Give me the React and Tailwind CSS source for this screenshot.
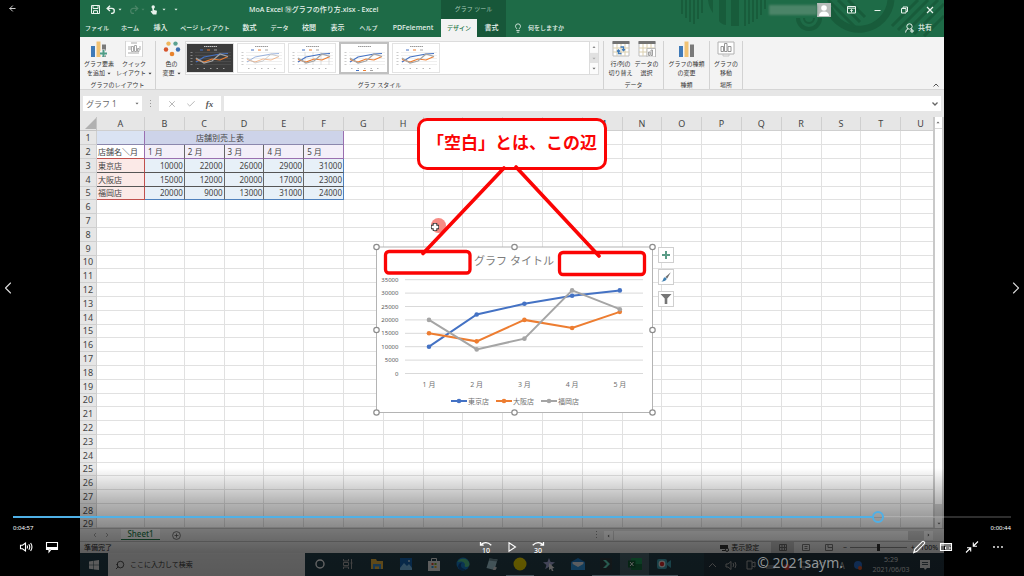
import React from "react";
import { ArrowLeft, ChevronLeft, ChevronRight, Search, Lightbulb, X, Check } from "lucide-react";

const TABS = [
  ["ファイル", "w-[34px] text-[6px]"],
  ["ホーム", "w-[32px] text-[6px]"],
  ["挿入", "w-[29px] text-[7px]"],
  ["ページ レイアウト", "w-[60px] text-[6px]"],
  ["数式", "w-[29px] text-[7px]"],
  ["データ", "w-[31px] text-[6px]"],
  ["校閲", "w-[28px] text-[7px]"],
  ["表示", "w-[29px] text-[7px]"],
  ["ヘルプ", "w-[33px] text-[6px]"],
  ["PDFelement", "w-[56px] text-[7px]"],
  ["デザイン", "w-[36px] text-[6px] bg-[#f3f3f3] text-[#217346]"],
  ["書式", "w-[29px] text-[7px] bg-[#175739]"],
];

const COLUMNS = "ABCDEFGHIJKLMNOPQRSTU".split("");
const MONTHS = ["1 月", "2 月", "3 月", "4 月", "5 月"];
const SHOPS = [
  { name: "東京店", color: "#4472c4", values: [10000, 22000, 26000, 29000, 31000] },
  { name: "大阪店", color: "#ed7d31", values: [15000, 12000, 20000, 17000, 23000] },
  { name: "福岡店", color: "#a5a5a5", values: [20000, 9000, 13000, 31000, 24000] },
];

function Caret() {
  return (
    <svg width="4" height="3" viewBox="0 0 4 3" className="inline-block shrink-0">
      <path d="M0.5 0.8h3L2 2.4z" fill="currentColor" />
    </svg>
  );
}

/* ---------- title bar ---------- */

function HeaderPattern() {
  return (
    <svg className="absolute right-0 top-0" width="270" height="37" viewBox="674 0 270 37" fill="none" stroke="#185c3b">
      <path d="M682 0v14M686 0v18M690 0v22M694 0v24M698 0v19M702 0v13" strokeWidth="2" />
      <path d="M708 0q1 8 5 13V0zM719 0h7v25q-5-1-7-4zM731 0h8v26h-8z" fill="#185c3b" stroke="none" />
      <path d="M745 0v26M749 0v24M753 0v22M757 0v19M761 0v15M765 0v9" strokeWidth="2" />
      <path d="M798 18a11 11 0 0 0 22 0" strokeWidth="4" />
      <path d="M804 18a5 5 0 0 0 10 0" strokeWidth="2" />
      <path d="M829 8a32 32 0 0 0 62-8" strokeWidth="7" />
      <path d="M828 0l27 27M838 0l22 22M848 0l17 17" strokeWidth="3" />
      <path d="M892 26l26-26M898 30l30-30M906 32l32-32M914 34l30-30M924 36l20-20" strokeWidth="3" />
    </svg>
  );
}

function TitleBar() {
  return (
    <header className="relative shrink-0 bg-[#1e6b47] text-[#e9f3ed]">
      <HeaderPattern />
      <div className="relative flex h-[19px] items-center">
        <div className="flex w-[361px] items-center">
          <div className="flex w-[144px] items-center pl-[11px]">
            <button aria-label="上書き保存" className="w-[15px]">
              <svg width="9" height="9" viewBox="0 0 9 9">
                <path d="M0.5 0.5h8v8h-8z M2 0.5v3h5v-3 M2.5 8.5V5.7h4v2.8" fill="none" stroke="currentColor" />
              </svg>
            </button>
            <button aria-label="元に戻す" className="flex w-[23px] items-center gap-[2px]">
              <svg width="10" height="9" viewBox="0 0 10 9">
                <path d="M4 0.8L1.2 3.4L4 6M1.4 3.4h4.4a2.4 2.4 0 0 1 0 5H5" fill="none" stroke="currentColor" strokeWidth="1.4" />
              </svg>
              <Caret />
            </button>
            <button aria-label="やり直し" className="flex w-[21px] items-center gap-[2px] text-[#4a8567]">
              <svg width="10" height="9" viewBox="0 0 10 9">
                <path d="M6 0.8L8.8 3.4L6 6M8.6 3.4H4.2a2.4 2.4 0 0 0 0 5H5" fill="none" stroke="currentColor" strokeWidth="1.2" />
              </svg>
              <Caret />
            </button>
            <button aria-label="タッチ" className="flex w-[24px] items-center gap-[4px]">
              <svg width="8" height="10" viewBox="0 0 8 10">
                <circle cx="3.2" cy="2" r="1.7" fill="currentColor" />
                <path d="M2.4 2h1.6v3l3 .8-.6 3.6H3L.6 6.4l1-.6.8.6z" fill="currentColor" />
              </svg>
              <Caret />
            </button>
            <button aria-label="カスタマイズ" className="flex"><Caret /></button>
          </div>
          <h1 className="flex-1 whitespace-nowrap pl-[25px] text-[7px] font-medium leading-[10px]">
            MoA Excel ⑲グラフの作り方.xlsx - Excel
          </h1>
        </div>
        <div className="flex h-full w-[65px] items-center justify-center bg-[#175739] text-[6px] text-[#a9cbb9]">グラフ ツール</div>
        <div className="ml-auto flex items-center">
          <div className="h-[10px] w-[48px] bg-[#4b8468] blur-[1px]" />
          <svg width="14" height="14" viewBox="0 0 14 14" className="mr-[16px]">
            <path d="M0 0h14v14H0z" fill="#b9bdbb" />
            <circle cx="7" cy="5" r="2.8" fill="#fff" />
            <path d="M2 13q0-4.600 5-4.600t5 4.600z" fill="#fff" />
          </svg>
          <button aria-label="リボンの表示オプション" className="flex w-[27px]">
            <svg width="9" height="8" viewBox="0 0 9 8" fill="none" stroke="currentColor">
              <path d="M0.500 0.500h8v6.500h-8zM0.500 2.200h8M4.500 6.500V3.700M3.200 4.800l1.300-1.200 1.300 1.200" />
            </svg>
          </button>
          <button aria-label="最小化" className="flex w-[26px]">
            <svg width="7" height="8" viewBox="0 0 7 8"><path d="M0.500 4.500h6" stroke="currentColor" /></svg>
          </button>
          <button aria-label="元に戻す（縮小）" className="flex w-[26px]">
            <svg width="8" height="8" viewBox="0 0 8 8" fill="none" stroke="currentColor">
              <path d="M1.500 2.500h4.500v4.500h-4.500zM3 2.500V1h4.500v4.500H6" />
            </svg>
          </button>
          <button aria-label="閉じる" className="flex w-[18px]">
            <svg width="8" height="8" viewBox="0 0 8 8"><path d="M1 1l6 6M7 1l-6 6" stroke="currentColor" strokeWidth="1.200" /></svg>
          </button>
        </div>
      </div>
      <nav className="relative flex h-[18px] items-stretch">
        {TABS.map(([label, cls]) => (
          <button key={label} className={"whitespace-nowrap font-medium leading-[18px] " + cls}>{label}</button>
        ))}
        <button className="ml-[7px] flex items-center gap-[5px] text-[6px] font-medium">
          <Lightbulb size={10} strokeWidth={2} />
          何をしますか
        </button>
        <button className="ml-auto mr-[12px] flex items-center gap-[4px] text-[7px] font-medium">
          <svg width="9" height="10" viewBox="0 0 9 10" fill="none" stroke="currentColor">
            <circle cx="4.500" cy="3.500" r="2.700" />
            <path d="M0.600 9.500q0-3 2.600-3.700M5.800 5.800l1 1M5 8h4M7 6v4" />
          </svg>
          共有
        </button>
      </nav>
    </header>
  );
}

/* ---------- ribbon ---------- */

function BarsIcon({ plus }) {
  return (
    <svg width="18" height="16" viewBox="0 0 18 16">
      <path d="M1 5h4v11H1z" fill="#3f7ab8" />
      <path d="M6.500 0.500h4V16h-4z" fill="#f0c274" />
      <path d="M12 3.500h4V16h-4z" fill="#7a7a7a" />
      {plus && <path d="M13.500 8.500v7M10 12h7.500" stroke="#f3f3f3" strokeWidth="4" />}
      {plus && <path d="M13.500 9v7M10 12.500h7" stroke="#4f9d87" strokeWidth="2" />}
    </svg>
  );
}

function LayoutIcon() {
  return (
    <svg width="18" height="16" viewBox="0 0 18 16" fill="none" stroke="#a9a9a9">
      <path d="M0.500 0h17v16h-17z" fill="#fff" stroke="#d4d4d4" />
      <path d="M6 2h6M3 6h4M3 8h4M14 6h2M14 8h2M3 12h11" strokeWidth="1.200" />
      <path d="M6.500 5.500h2v5h-2zM9.500 4.500h2v6h-2zM12.500 7.500h1.500v3h-1.500z" />
    </svg>
  );
}

function PaletteIcon() {
  return (
    <svg width="18" height="16" viewBox="0 0 18 16">
      <circle cx="5.500" cy="2.600" r="2.200" fill="#eeb65c" />
      <circle cx="12.500" cy="2.600" r="2.200" fill="#5ba191" />
      <circle cx="3" cy="8.500" r="2.200" fill="#d6552d" />
      <circle cx="15" cy="8.500" r="2.200" fill="#3d6fb0" />
      <circle cx="9" cy="13" r="2.300" fill="#e8832d" />
    </svg>
  );
}

function SheetIcon({ swap }) {
  return (
    <svg width="18" height="16" viewBox="0 0 18 16" fill="none">
      <path d="M1 1h16v14H1z" fill="#fff" stroke="#bdbdbd" />
      <path d="M0.500 0h17v3h-17z" fill="#737373" />
      <path d="M1 7h16M1 11h16M5 3v12M9 3v12M13 3v12" stroke="#dbcfae" />
      {swap ? (
        <path d="M8.500 6h3v3.500M10 8.200l1.500 1.500 1.500-1.500M9.500 12.500h-3V9.300M5 10.500l1.500-1.500 1.500 1.500" stroke="#3f7ab8" strokeWidth="1.300" />
      ) : (
        <g stroke="#8a8a8a">
          <path d="M9 7.500h8.500V16H9z" fill="#fff" stroke="#bbb" />
          <path d="M10.500 11h1.500v3.500h-1.500zM13 9h1.500v5.500H13z" strokeWidth="0.800" />
        </g>
      )}
    </svg>
  );
}

function MoveIcon() {
  return (
    <svg width="18" height="16" viewBox="0 0 18 16" fill="none" stroke="#8a8a8a">
      <path d="M1 1h16v12H1z" fill="#fff" stroke="#b0b0b0" />
      <path d="M4 5.500h2.500v5H4zM7.500 2.500H10v8H7.500zM11 5.500h3v5h-3z" strokeWidth="0.900" />
      <path d="M6 13v2h6v-2" stroke="#c5c5c5" />
    </svg>
  );
}

function ToolButton({ icon, lines, caret, className }) {
  return (
    <button className={"flex flex-col items-center justify-start whitespace-nowrap text-[6px] leading-[9px] " + className}>
      {icon}
      <span className="mt-[3px]">{lines[0]}</span>
      <span className="flex items-center gap-[2px]">{lines[1]}{caret && <Caret />}</span>
    </button>
  );
}

function Group({ label, className, children }) {
  return (
    <section className={"flex flex-col border-r border-[#d2d2d2] " + className}>
      <div className="flex flex-1 justify-center">{children}</div>
      <h2 className="text-center text-[6px] leading-[8px]">{label}</h2>
    </section>
  );
}

function MiniChart({ dark, soft, grid, selected }) {
  const ink = dark ? "#c8c8c8" : "#9a9a9a";
  return (
    <button aria-label="グラフ スタイル" className={selected ? "border-2 border-[#c0c0c0] bg-white" : "border border-[#e3e3e3] bg-white"}>
      <svg width="46" height="28" viewBox="0 0 46 28" fill="none">
        <path d="M0 0h46v28H0z" fill={dark ? "#3c3c3c" : "#fff"} />
        <path d="M17 2.500h13" stroke={ink} strokeWidth="1" strokeDasharray="1.500 0.500" />
        <path d="M8 8.500h36M8 11.500h36M8 14.500h36M8 17.500h36M8 20.500h36" stroke={dark ? "#555" : "#e4e4e4"} strokeWidth="0.600" />
        {grid && <path d="M16 8v13M24 8v13M32 8v13M40 8v13" stroke="#ccc" strokeWidth="0.600" />}
        <path d="M4.500 8v13" stroke={ink} strokeWidth="2" strokeDasharray="1 2" opacity="0.500" />
        <path d="M10 24.500h32" stroke={ink} strokeDasharray="1.500 5" opacity="0.700" />
        <g strokeWidth={soft ? "0.800" : "1.200"} opacity={soft ? "0.650" : "1"}>
          <path d="M9 18l8-5 8-1.500 8-1.500 8-.5" stroke="#4472c4" />
          <path d="M9 15.500l8 2.500 8-3 8 1 8-3.500" stroke="#ed7d31" />
          <path d="M9 14l8 5 8-2 8-7 8 2.500" stroke="#a5a5a5" />
        </g>
        <path d={selected ? "M15 26.500h3" : "M13 6h3"} stroke="#4472c4" />
        <path d={selected ? "M22 26.500h3" : "M20 6h3"} stroke="#ed7d31" />
        <path d={selected ? "M29 26.500h3" : "M27 6h3"} stroke="#a5a5a5" />
      </svg>
    </button>
  );
}

function Ribbon() {
  return (
    <div className="flex h-[53px] shrink-0 border-b border-[#d5d5d5] bg-[#f3f3f3] pt-[4px] text-[#333]">
      <Group label="グラフのレイアウト" className="w-[76px]">
        <ToolButton className="w-[36px] pl-px" icon={<BarsIcon plus />} lines={["グラフ要素", "を追加"]} caret />
        <ToolButton className="w-[38px] pr-[3px]" icon={<LayoutIcon />} lines={["クイック", "レイアウト"]} caret />
      </Group>
      <Group label="グラフ スタイル" className="w-[448px]">
        <ToolButton className="w-[29px] pl-[2px]" icon={<PaletteIcon />} lines={["色の", "変更"]} caret />
        <div className="flex h-[34px] flex-1 items-center gap-[3px] border border-[#dcdcdc] bg-white">
          <MiniChart dark />
          <MiniChart soft />
          <MiniChart grid />
          <MiniChart selected />
          <MiniChart />
        </div>
        <div className="mr-[4px] flex h-[34px] w-[9px] flex-col border border-l-0 border-[#dcdcdc] text-[#666]">
          <button aria-label="上へ" className="flex flex-1 rotate-180 items-center justify-center bg-[#fbfbfb]"><Caret /></button>
          <button aria-label="下へ" className="flex flex-1 items-center justify-center bg-[#e1e1e1] text-[#aaa]"><Caret /></button>
          <button aria-label="その他" className="flex flex-1 items-center justify-center bg-[#fbfbfb]"><Caret /></button>
        </div>
      </Group>
      <Group label="データ" className="w-[60px]">
        <ToolButton className="w-[26px]" icon={<SheetIcon swap />} lines={["行/列の", "切り替え"]} />
        <ToolButton className="w-[26px]" icon={<SheetIcon />} lines={["データの", "選択"]} />
      </Group>
      <Group label="種類" className="w-[46px]">
        <ToolButton className="w-[40px]" icon={<BarsIcon />} lines={["グラフの種類", "の変更"]} />
      </Group>
      <Group label="場所" className="w-[33px]">
        <ToolButton className="w-[30px]" icon={<MoveIcon />} lines={["グラフの", "移動"]} />
      </Group>
      <button aria-label="リボンを折りたたむ" className="ml-auto mr-[5px] self-end pb-[2px]">
        <svg width="6" height="4" viewBox="0 0 6 4"><path d="M0.500 3.500L3 1l2.500 2.500" fill="none" stroke="#555" /></svg>
      </button>
    </div>
  );
}

function FormulaBar() {
  return (
    <div className="flex h-[27px] shrink-0 items-center bg-[#e6e6e6] px-[3px] text-[#666]">
      <button className="flex h-[15px] w-[59px] items-center justify-between bg-white px-[3px] text-[8px]">
        グラフ 1<Caret />
      </button>
      <svg width="17" height="8" viewBox="0 0 17 8"><path d="M8.500 0v8" stroke="#999" strokeDasharray="1 2" /></svg>
      <div className="flex h-[15px] w-[62px] items-center justify-around bg-white px-[3px]">
        <button aria-label="キャンセル"><X size={10} color="#aaa" /></button>
        <button aria-label="入力"><Check size={10} color="#aaa" /></button>
        <button className="font-['Liberation_Serif',serif] text-[9px] font-bold italic leading-[12px] text-[#555]">fx</button>
      </div>
      <div className="ml-[3px] flex h-[15px] min-w-0 flex-1 items-center bg-white pr-[3px]">
        <input aria-label="数式" className="min-w-0 flex-1 text-[8px] outline-none" />
        <svg width="6" height="4" viewBox="0 0 6 4"><path d="M0.500 0.500L3 3l2.500-2.500" fill="none" stroke="#666" strokeWidth="1.300" /></svg>
      </div>
    </div>
  );
}

/* ---------- sheet ---------- */

const PLAIN = "border-r border-b border-[#e1e1e1] p-0";

function RowCells({ row }) {
  if (row === 1) {
    return (
      <>
        <td
          colSpan={6}
          className="border-b border-r border-b-[#8b87ad] border-r-[#9a6fb0] bg-[linear-gradient(to_right,#dae3f3_47px,#9a6fb0_47px,#9a6fb0_48px,#cdd3e9_48px)] text-center"
        >
          店舗別売上表
        </td>
        <Blank from={6} />
      </>
    );
  }
  if (row === 2) {
    return (
      <>
        <td className="border-b border-r border-b-[#c0504d] border-r-[#9a6fb0] pl-px">店舗名＼月</td>
        {MONTHS.map((m, i) => (
          <td key={m} className={"border-b border-r border-b-[#9a6fb0] bg-[#f3eff9] pl-[3px] " + (i === 4 ? "border-r-[#9a6fb0]" : "border-r-[#666]")}>{m}</td>
        ))}
        <Blank from={6} />
      </>
    );
  }
  if (row <= 5) {
    const shop = SHOPS[row - 3];
    const last = row === 5;
    return (
      <>
        <td className={"border-b border-r border-r-[#c0504d] bg-[#fbe9e7] pl-px " + (last ? "border-b-[#c0504d]" : "border-b-[#555]")}>{shop.name}</td>
        {shop.values.map((v, i) => (
          <td key={v} className={"border-b border-r bg-[#e7f0f8] pr-px text-right " + (last ? "border-b-[#4f81bd] " : "border-b-[#555] ") + (i === 4 ? "border-r-[#4f81bd]" : "border-r-[#666]")}>{v}</td>
        ))}
        <Blank from={6} />
      </>
    );
  }
  return <Blank from={0} />;
}

function Blank({ from }) {
  return COLUMNS.slice(from).map((c) => <td key={c} className={PLAIN} />);
}

function rowHeight(row) {
  if (row === 29) return "h-[10px] leading-[9px]";
  return row % 5 === 0 ? "h-[13px]" : "h-[14px]";
}

function Sheet() {
  return (
    <table className="w-[861px] min-w-full table-fixed border-separate border-spacing-0 whitespace-nowrap bg-white text-[8px] leading-[12px] text-[#444]">
      <colgroup>
        <col className="w-[17px]" />
        <col className="w-[48px]" />
        {COLUMNS.slice(1).map((c) => <col key={c} />)}
      </colgroup>
      <thead>
        <tr className="h-[14px] bg-[#e6e6e6]">
          <th className="border-b border-r border-[#c4c4c4] p-0">
            <svg width="11" height="11" viewBox="0 0 11 11" className="ml-auto"><path d="M11 0v11H0z" fill="#b1b1b1" /></svg>
          </th>
          {COLUMNS.map((c) => (
            <th key={c} scope="col" className="border-b border-r border-[#cfcfcf] p-0 text-[9px] font-normal">{c}</th>
          ))}
        </tr>
      </thead>
      <tbody>
        {Array.from({ length: 29 }, (_, i) => i + 1).map((row) => (
          <tr key={row} className={rowHeight(row)}>
            <th scope="row" className={"border-r border-[#cfcfcf] bg-[#e6e6e6] p-0 text-[9px] font-normal " + (row === 29 ? "" : "border-b")}>{row}</th>
            <RowCells row={row} />
          </tr>
        ))}
      </tbody>
    </table>
  );
}

/* ---------- chart ---------- */

const px = (i) => 429 + i * 47.7;
const py = (v) => 373.5 - (v / 5000) * 13.4;
const HANDLES = [[376.5, 247], [514.5, 247], [652.5, 247], [376.5, 330], [652.5, 330], [376.5, 412.5], [514.5, 412.5], [652.5, 412.5]];

function Chart() {
  return (
    <svg className="absolute left-[292px] top-[126px]" width="284" height="174" viewBox="372 243 284 174" role="img" aria-label="グラフ タイトル">
      <rect x="376.500" y="247" width="276" height="165.500" fill="#fff" stroke="#b4b4b4" />
      <text x="514" y="265" textAnchor="middle" fontSize="11" fill="#7d7d7d">グラフ タイトル</text>
      {Array.from({ length: 8 }, (_, i) => i * 5000).map((v) => (
        <g key={v}>
          <path d={`M405 ${py(v)}H643`} stroke="#d9d9d9" />
          <text x="398.500" y={py(v) + 2} textAnchor="end" fontSize="6" fill="#595959">{v}</text>
        </g>
      ))}
      {MONTHS.map((m, i) => (
        <text key={m} x={px(i)} y="386.500" textAnchor="middle" fontSize="7" fill="#707070">{m}</text>
      ))}
      {SHOPS.map((s, k) => (
        <g key={s.name}>
          <polyline points={s.values.map((v, i) => `${px(i)},${py(v)}`).join(" ")} fill="none" stroke={s.color} strokeWidth="2" />
          {s.values.map((v, i) => <circle key={i} cx={px(i)} cy={py(v)} r="2.300" fill={s.color} />)}
          <path d={`M${451 + k * 45} 401h16`} stroke={s.color} strokeWidth="2" />
          <circle cx={459 + k * 45} cy="401" r="2.300" fill={s.color} />
          <text x={468 + k * 45} y="403.500" fontSize="7" fill="#707070">{s.name}</text>
        </g>
      ))}
      {HANDLES.map(([x, y]) => (
        <circle key={`${x}-${y}`} cx={x} cy={y} r="2.700" fill="#fff" stroke="#8c8c8c" strokeWidth="1.200" />
      ))}
    </svg>
  );
}

function ChartButtons() {
  const box = "flex size-[16px] items-center justify-center border border-[#cfcfcf] bg-white";
  return (
    <div className="absolute left-[578px] top-[130px] flex flex-col gap-[6px]">
      <button aria-label="グラフ要素" className={box}>
        <svg width="8" height="8" viewBox="0 0 8 8"><path d="M4 0v8M0 4h8" stroke="#5b9c87" strokeWidth="2" /></svg>
      </button>
      <button aria-label="グラフ スタイル" className={box}>
        <svg width="10" height="10" viewBox="0 0 10 10">
          <path d="M9.800 0.200L6.200 6.400 4.400 4.900z" fill="#6d6d6d" />
          <path d="M4 5.300l1.800 1.500Q4.500 9.800 0.300 9.500 2.200 8.500 2.300 7 2.600 5.600 4 5.300z" fill="#3f7fb0" />
        </svg>
      </button>
      <button aria-label="グラフ フィルター" className={box}>
        <svg width="12" height="10" viewBox="0 0 12 10"><path d="M0.500 0h11L7.300 4.500V10H4.700V4.500z" fill="#767676" /></svg>
      </button>
    </div>
  );
}

function Annotations() {
  return (
    <>
      <div className="absolute left-[337px] top-px flex h-[52px] w-[190px] items-center justify-center whitespace-nowrap rounded-[10px] border-[3px] border-[#fb0404] bg-white pb-[2px] text-[17px] font-bold text-[#fb0404]">
        「空白」とは、この辺
      </div>
      <svg className="absolute left-[300px] top-[43px]" width="270" height="120" viewBox="380 160 270 120" fill="none" stroke="#fb0404" strokeWidth="3.300">
        <circle cx="438.500" cy="225.500" r="7.500" fill="#f78b84" stroke="none" />
        <path d="M435 223v8M431 227h8" stroke="#333" strokeWidth="4.500" />
        <path d="M435 223.700v6.600M431.700 227h6.600" stroke="#fff" strokeWidth="2.600" />
        <rect x="385.500" y="251.500" width="84.500" height="21.500" rx="3.500" fill="#fff" />
        <rect x="559.500" y="252.500" width="85" height="22" rx="3.500" fill="#fff" />
        <path d="M504 168L423 253.500M516 167L599 256" strokeLinecap="round" strokeWidth="3.600" />
      </svg>
    </>
  );
}

function VerticalScroll() {
  return (
    <div className="flex w-[11px] shrink-0 flex-col border-l-2 border-r-2 border-[#c9c9c9] bg-[#d9d9d9] text-[#666]">
      <button aria-label="上へスクロール" className="flex h-[11px] rotate-180 items-center justify-center bg-white"><Caret /></button>
      <div className="mt-px flex-1 bg-white" />
      <div className="h-[14px]" />
      <button aria-label="下へスクロール" className="flex h-[10px] items-center justify-center bg-[#f4f4f4]"><Caret /></button>
    </div>
  );
}

function SheetTabs() {
  return (
    <div className="flex h-[13px] shrink-0 items-center border-t border-[#bbb] bg-[#dedede] text-[#555]">
      <div className="flex w-[41px] justify-center gap-[8px] text-[#999]">
        <svg width="4" height="6" viewBox="0 0 4 6"><path d="M3 1L1 3l2 2" fill="none" stroke="currentColor" /></svg>
        <svg width="4" height="6" viewBox="0 0 4 6"><path d="M1 1l2 2-2 2" fill="none" stroke="currentColor" /></svg>
      </div>
      <button className="h-[11px] w-[39px] self-start border-b border-[#217346] bg-[#f0f0f0] text-[8px] font-medium leading-[10px] text-[#217346]">Sheet1</button>
      <button aria-label="新しいシート" className="ml-[12px]">
        <svg width="9" height="9" viewBox="0 0 9 9" fill="none" stroke="#555" strokeWidth="0.800"><circle cx="4.500" cy="4.500" r="3.900" /><path d="M4.500 2.500v4M2.500 4.500h4" /></svg>
      </button>
      <svg width="3" height="8" viewBox="0 0 3 8" className="ml-auto mr-[6px]"><path d="M1.500 0v8" stroke="#888" strokeDasharray="1 2" /></svg>
      <div className="mr-[11px] flex w-[329px] items-center bg-[#d0d0d0]">
        <button aria-label="左へスクロール" className="flex h-[9px] w-[9px] rotate-90 items-center justify-center bg-[#f4f4f4]"><Caret /></button>
        <div className="ml-px h-[9px] flex-1 bg-[#f4f4f4]" />
        <div className="w-[16px]" />
        <button aria-label="右へスクロール" className="flex h-[9px] w-[9px] -rotate-90 items-center justify-center bg-[#f4f4f4]"><Caret /></button>
      </div>
    </div>
  );
}

function StatusBar() {
  return (
    <div className="flex h-[12px] shrink-0 items-center border-t border-[#b5b5b5] bg-[#e2e2e2] pl-[4px] pr-[6px] text-[7px] leading-[11px] text-[#222]">
      <span>準備完了</span>
      <button className="ml-auto mr-[12px] flex items-center gap-[2px] whitespace-nowrap">
        <svg width="9" height="8" viewBox="0 0 9 8"><path d="M0 1h8v4H0zM2 6h3v1H2z" fill="#333" /><circle cx="7" cy="5.800" r="1.600" fill="#dcdcdc" stroke="#333" /></svg>
        表示設定
      </button>
      <button aria-label="標準" className="flex h-full w-[23px] items-center justify-center bg-[#bdbdbd]">
        <svg width="8" height="7" viewBox="0 0 8 7" fill="none" stroke="#666"><path d="M.5 .5h7v6h-7zM3 .5v6M5.500 .5v6M.5 3.500h7" /></svg>
      </button>
      <button aria-label="ページ レイアウト" className="flex w-[23px] justify-center">
        <svg width="8" height="7" viewBox="0 0 8 7" fill="none" stroke="#777"><path d="M.5 .5h7v6h-7zM2.500 2.500h3M2.500 4.500h3" /></svg>
      </button>
      <button aria-label="改ページ プレビュー" className="flex w-[23px] justify-center">
        <svg width="8" height="7" viewBox="0 0 8 7" fill="none" stroke="#777"><path d="M.5 .5h7v6h-7zM3 .5v3h4.500" /></svg>
      </button>
      <span className="w-[10px] text-center">−</span>
      <input
        type="range"
        aria-label="ズーム"
        defaultValue="50"
        className="h-[8px] w-[57px] appearance-none bg-transparent [&::-webkit-slider-runnable-track]:h-px [&::-webkit-slider-runnable-track]:bg-[#888] [&::-webkit-slider-thumb]:-mt-[3px] [&::-webkit-slider-thumb]:h-[7px] [&::-webkit-slider-thumb]:w-[3px] [&::-webkit-slider-thumb]:appearance-none [&::-webkit-slider-thumb]:bg-[#333]"
      />
      <span className="w-[11px] text-center">+</span>
      <span className="pl-[2px]">100%</span>
    </div>
  );
}

/* ---------- task bar ---------- */

const APPS = [
  ["Cortana", <circle cx="7" cy="7" r="4" fill="none" stroke="#fff" strokeWidth="1.400" />],
  ["タスク ビュー", <path d="M2.500 2v2h5V2M2.500 12v-2h5v2M2.500 5.500h5v3h-5zM10.500 2v10M9.500 6h2" fill="none" stroke="#aaa" />],
  ["エクスプローラー", <><path d="M1 2h5l1 2h6v8H1z" fill="#f0b93f" /><path d="M3 7h8v5H9V9.500H5V12H3z" fill="#3f8fd0" /></>],
  ["フォト", <><path d="M1 1h12v12H1z" fill="#1467b8" /><path d="M1 11l4-5 3 3 2-2 3 4v2H1z" fill="#7cc4f5" /><circle cx="10" cy="4" r="1" fill="#cfe9fb" /></>],
  ["Store", <><path d="M4.500 4V1.500h5V4" fill="none" stroke="#eee" /><path d="M1 4h12v10H1z" fill="#eee" /><path d="M4.500 6h2v2h-2z" fill="#e5482c" /><path d="M7.500 6h2v2h-2z" fill="#7db52c" /><path d="M4.500 9h2v2h-2z" fill="#2c9fe0" /><path d="M7.500 9h2v2h-2z" fill="#f2b62b" /></>],
  ["Edge", <><circle cx="7" cy="7" r="6.500" fill="#1683d0" /><path d="M1.500 5A6.500 6.500 0 0 1 13.500 7q0 3-3.500 3-2-.3-1-2.500Q8 4 4.500 4.500z" fill="#55cc8f" /><path d="M5 8q-.5 3.500 5 4.500-6 3-8-3Q2.500 6 6 5.500 5 6.500 5 8z" fill="#0d4f96" /></>],
  ["メモ帳", <><path d="M4.500 1.500l8 1-3 10.500-8-2z" fill="#a9d3df" /><path d="M4.500 1.500l8 1-.5 2-8-1z" fill="#6f8f99" /><path d="M9 9.500l3 1-1.500 2.500L8 13z" fill="#e0e0e0" /></>],
  ["録画", <circle cx="7" cy="7" r="6.500" fill="#f4dc00" />],
  ["スター", <><path d="M7 1l1.600 4 4.400.3-3.400 2.700 1.200 4.200L7 9.800l-3.800 2.400 1.200-4.200L1 5.300 5.400 5z" fill="#aab0e0" /><path d="M7 6l5.500 5-2.300.2L11.500 14l-1.500.4-1-2.700L7 13z" fill="#eee" /></>],
  ["メール", <><path d="M0 5l7-4 7 4v8H0z" fill="#1c7fd0" /><path d="M1.500 5h11v3L7 10.500 1.500 8z" fill="#e8eef4" /><path d="M0 6l7 4 7-4v7H0z" fill="#2f9be8" /></>],
  ["Filmora", <><path d="M1 1h12v12H1z" fill="#2f3b40" /><path d="M4 3l3 0 4 4-4 4H4l4-4z" fill="#66e0c4" /></>],
  ["Excel", <><path d="M3 1h11v12H3z" fill="#1f9c5b" /><path d="M3 7h11v6H3z" fill="#14713f" /><path d="M0 3.500h7.500v7H0z" fill="#0f5c32" /><path d="M2 5l3.500 4M5.500 5L2 9" stroke="#fff" /></>],
  ["レコーダー", <><rect x="0" y="2" width="10" height="10" rx="2" fill="#3fa6b8" /><path d="M10 6l4-3v8l-4-3z" fill="#3fa6b8" /><circle cx="5" cy="7" r="3.400" fill="#eee" /><circle cx="5" cy="7" r="2.200" fill="#e02a2a" /></>],
];

function TaskBar() {
  return (
    <footer className="flex h-[23px] shrink-0 items-stretch bg-[#24404b] text-white">
      <button aria-label="スタート" className="flex w-[28px] items-center justify-center">
        <svg width="10" height="10" viewBox="0 0 10 10" fill="#e8e8e8"><path d="M0 1.400L4.500.8v4H0zM5 .7L10 0v4.800H5zM0 5.300h4.500v4L0 8.700zM5 5.300h5V10L5 9.400z" /></svg>
      </button>
      <label className="flex w-[197px] items-center gap-[5px] bg-[#ececec] pl-[7px] text-[#222]">
        <Search size={10} strokeWidth={1.8} className="-scale-x-100" />
        <input aria-label="検索" placeholder="ここに入力して検索" className="min-w-0 flex-1 text-[7px] leading-[12px] outline-none placeholder:text-[#333]" />
      </label>
      <div className="flex">
        {APPS.map(([name, art], i) => (
          <button
            key={name}
            aria-label={name}
            className={
              "flex items-center justify-center border-b " +
              (i % 3 === 1 ? "w-[28px] " : "w-[29px] ") +
              ([7, 10, 11, 12].includes(i) ? "border-[#b9dcf0] " : "border-transparent ") +
              (i === 11 ? "bg-[#4a6670]" : "")
            }
          >
            <svg width="14" height="14" viewBox="0 0 14 14">{art}</svg>
          </button>
        ))}
      </div>
      <div className="ml-auto flex items-center bg-[#22343f]">
        <svg width="166" height="12" viewBox="704 557 166 12" fill="none" stroke="#b0b0b0">
          <path d="M709 565l3.500-3.500 3.500 3.500" />
          <path d="M726 562h2l3-2.500v8l-3-2.500h-2zM733 561q1.500 2 0 4M735 560q2 3 0 6" />
          <path d="M747 559h5v8h-5zM752 561l3-1v5l-3-1" />
          <path d="M766 564h9v2h-9zM800 560h8v5h-8zM802 567h4M816 566q4-7 9-5" />
          <circle cx="787" cy="565" r="3" fill="#d63a30" stroke="none" />
          <text x="842" y="567" textAnchor="middle" fontSize="8" fill="#d0d0d0" stroke="none">A</text>
          <circle cx="858" cy="563" r="4" fill="#2a6fd0" stroke="none" />
          <circle cx="860" cy="566" r="2" fill="#e25a2c" stroke="none" />
        </svg>
        <time className="w-[42px] text-center text-[7px] leading-[10px] text-[#dcdcdc]">
          5:29<br />2021/06/03
        </time>
        <button aria-label="通知" className="ml-[8px] mr-[14px]">
          <svg width="10" height="10" viewBox="0 0 10 10"><path d="M0 0h10v8H7l-2 2-1-2H0z" fill="#e4e4e4" /><path d="M2 2.500h6M2 4.500h6" stroke="#22343f" strokeWidth="0.800" /></svg>
        </button>
      </div>
    </footer>
  );
}

/* ---------- video player ---------- */

function PlayerButton({ label, children }) {
  return (
    <button aria-label={label} className="flex h-[28px] w-[26px] items-center justify-center">
      <svg width="14" height="14" viewBox="0 0 14 14" fill="none" stroke="#fff" strokeWidth="1.100">{children}</svg>
    </button>
  );
}

function Player() {
  return (
    <div className="absolute inset-x-0 bottom-0 flex h-[108px] flex-col bg-[linear-gradient(to_bottom,rgba(0,0,0,0)_0%,rgba(0,0,0,0.28)_30%,rgba(0,0,0,0.45)_54%,rgba(0,0,0,0.6)_80%,rgba(0,0,0,0.62)_100%)] px-[13px] pb-[15px] pt-[43px] text-white">
      <input
        type="range"
        aria-label="再生位置"
        min="0"
        max="1000"
        defaultValue="871"
        className="h-[12px] w-full appearance-none bg-transparent [&::-webkit-slider-runnable-track]:h-[2px] [&::-webkit-slider-runnable-track]:bg-[linear-gradient(to_right,#4fb0e6_86.1%,transparent_86.1%,transparent_87.3%,rgba(255,255,255,0.18)_87.3%)] [&::-webkit-slider-thumb]:-mt-[5px] [&::-webkit-slider-thumb]:size-[12px] [&::-webkit-slider-thumb]:appearance-none [&::-webkit-slider-thumb]:rounded-full [&::-webkit-slider-thumb]:border-2 [&::-webkit-slider-thumb]:border-solid [&::-webkit-slider-thumb]:border-[#4fb0e6] [&::-webkit-slider-thumb]:bg-transparent"
      />
      <div className="flex h-[10px] items-center justify-between text-[6px] leading-[10px]">
        <span>0:04:57</span>
        <span>0:00:44</span>
      </div>
      <div className="grid grid-cols-[1fr_auto_1fr]">
        <div className="flex">
          <PlayerButton label="音量"><path d="M1.500 5.300h2L6.500 3v8L3.500 8.700h-2zM8 5.500q1 1.500 0 3M9.800 4.200q1.900 2.800 0 5.600M11.600 3q2.700 4 0 8" /></PlayerButton>
          <PlayerButton label="字幕"><path d="M1.500 2.500h11v7H6L4 12V9.500H1.500z" /><path d="M2 7.500h10v1.500H2z" fill="#fff" /></PlayerButton>
        </div>
        <div className="flex">
          <PlayerButton label="10 秒戻る"><path d="M1.800 4.800Q7 0.200 12.300 5.200M1.500 2v3.200h3.200" strokeWidth="1.300" /><text x="7" y="12.500" textAnchor="middle" fontSize="7" fontWeight="500" fill="#fff" stroke="none">10</text></PlayerButton>
          <PlayerButton label="再生"><path d="M4 2.800l6.500 4.200-6.500 4.200z" /></PlayerButton>
          <PlayerButton label="30 秒進む"><path d="M1.700 5.200Q7 0.200 12.200 4.800M12.500 2v3.200H9.300" strokeWidth="1.300" /><text x="7" y="12.500" textAnchor="middle" fontSize="7" fontWeight="500" fill="#fff" stroke="none">30</text></PlayerButton>
        </div>
        <div className="flex justify-end">
          <PlayerButton label="描画"><path d="M0.800 12.500l1-3.500L9 1.800q1.200-1 2.200 0t0 2.200L4 11.300z" /></PlayerButton>
          <PlayerButton label="ミニ表示"><path d="M1.500 3.500h11v7h-11zM1.500 5h11" /><path d="M6.500 7h4.500v2H6.500z" /></PlayerButton>
          <PlayerButton label="全画面表示の終了"><path d="M13 1.500L8.500 6M8.300 2.500v3.700H12M1 12.500L5.500 8M2 7.800h3.700v3.700" /></PlayerButton>
          <PlayerButton label="その他"><g fill="#fff" stroke="none"><circle cx="3" cy="7" r="0.900" /><circle cx="7" cy="7" r="0.900" /><circle cx="11" cy="7" r="0.900" /></g></PlayerButton>
        </div>
      </div>
      <span className="pointer-events-none absolute bottom-[4px] right-[181px] whitespace-nowrap text-[14px] leading-[18px] text-[#8f9497]">© 2021saym.</span>
    </div>
  );
}

export default function App() {
  return (
    <div className="relative flex h-screen overflow-hidden bg-black font-['Noto_Sans','Noto_Sans_CJK_JP',sans-serif]">
      <aside className="grid w-[80px] shrink-0 grid-rows-[1fr_auto_1fr] text-[#ddd]">
        <a href="#back" aria-label="戻る" className="justify-self-start pl-[8px] pt-[4px]"><ArrowLeft size={9} strokeWidth={2.5} /></a>
        <button aria-label="前へ" className="justify-self-start"><ChevronLeft size={20} strokeWidth={1.3} className="-ml-[2px]" /></button>
      </aside>
      <main className="flex min-w-0 flex-1 flex-col">
        <TitleBar />
        <Ribbon />
        <FormulaBar />
        <div className="relative flex min-h-0 flex-1 overflow-hidden">
          <div className="min-w-0 flex-1 overflow-hidden"><Sheet /></div>
          <VerticalScroll />
          <Chart />
          <ChartButtons />
          <Annotations />
        </div>
        <SheetTabs />
        <StatusBar />
        <TaskBar />
      </main>
      <aside className="flex w-[80px] shrink-0 items-center justify-end text-[#ddd]">
        <button aria-label="次へ" className="mr-[-2px]"><ChevronRight size={20} strokeWidth={1.3} /></button>
      </aside>
      <Player />
    </div>
  );
}
